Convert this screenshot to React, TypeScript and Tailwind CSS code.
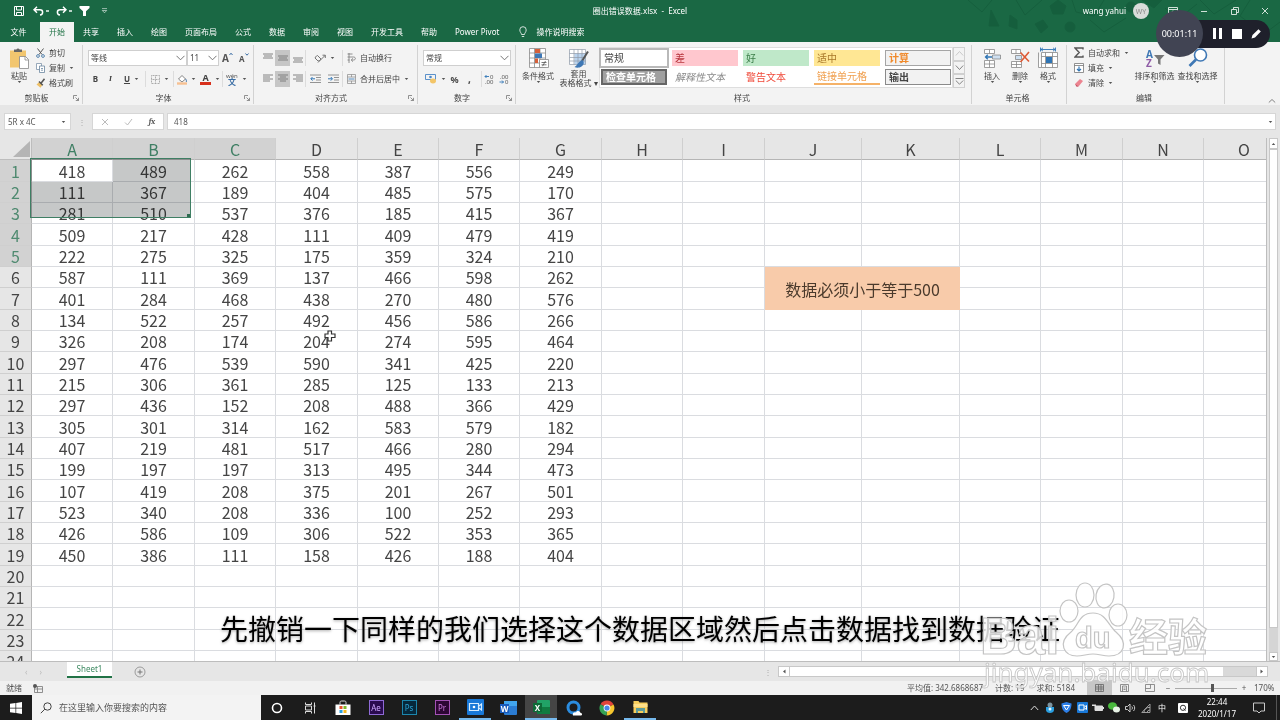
import type { ReactNode } from 'react'
import clsx from 'clsx'

const tabs = ['开始', '共享', '插入', '绘图', '页面布局', '公式', '数据', '审阅', '视图', '开发工具', '帮助', 'Power Pivot']

const columns = [
  { name: 'A', width: 'w-[81px]' },
  { name: 'B', width: 'w-[82px]' },
  { name: 'C', width: 'w-[81px]' },
  { name: 'D', width: 'w-[82px]' },
  { name: 'E', width: 'w-[81px]' },
  { name: 'F', width: 'w-[81px]' },
  { name: 'G', width: 'w-[82px]' },
  { name: 'H', width: 'w-[81px]' },
  { name: 'I', width: 'w-[82px]' },
  { name: 'J', width: 'w-[97px]' },
  { name: 'K', width: 'w-[98px]' },
  { name: 'L', width: 'w-[81px]' },
  { name: 'M', width: 'w-[82px]' },
  { name: 'N', width: 'w-[81px]' },
  { name: 'O', width: 'w-[81px]' },
]

const values = [
  [418, 489, 262, 558, 387, 556, 249],
  [111, 367, 189, 404, 485, 575, 170],
  [281, 510, 537, 376, 185, 415, 367],
  [509, 217, 428, 111, 409, 479, 419],
  [222, 275, 325, 175, 359, 324, 210],
  [587, 111, 369, 137, 466, 598, 262],
  [401, 284, 468, 438, 270, 480, 576],
  [134, 522, 257, 492, 456, 586, 266],
  [326, 208, 174, 204, 274, 595, 464],
  [297, 476, 539, 590, 341, 425, 220],
  [215, 306, 361, 285, 125, 133, 213],
  [297, 436, 152, 208, 488, 366, 429],
  [305, 301, 314, 162, 583, 579, 182],
  [407, 219, 481, 517, 466, 280, 294],
  [199, 197, 197, 313, 495, 344, 473],
  [107, 419, 208, 375, 201, 267, 501],
  [523, 340, 208, 336, 100, 252, 293],
  [426, 586, 109, 306, 522, 353, 365],
  [450, 386, 111, 158, 426, 188, 404],
]

const rowCount = 24

const cellStyles = [
  { name: '常规', look: 'bg-white text-[#444] outline-2 outline-[#b9b9b9]' },
  { name: '差', look: 'bg-[#ffc7ce] text-[#b8373f]' },
  { name: '好', look: 'bg-[#bfe8c9] text-[#3b7d48]' },
  { name: '适中', look: 'bg-[#ffe794] text-[#a9782a]' },
  { name: '计算', look: 'border border-[#a5a5a5] bg-[#f2f2f2] font-bold text-[#f08a2c]' },
  { name: '检查单元格', look: 'border-2 border-[#666] bg-[#a0a0a0] font-bold text-white' },
  { name: '解释性文本', look: 'italic text-[#8a8a8a]' },
  { name: '警告文本', look: 'text-[#f04a3a]' },
  { name: '链接单元格', look: 'border-b-2 border-[#f5b268] text-[#f0a050]' },
  { name: '输出', look: 'border border-[#8a8a8a] bg-[#f2f2f2] font-bold text-[#444]' },
]

function Svg({ w, h, children, label }: { w: number; h: number; children: ReactNode; label?: string }) {
  return (
    <svg width={w} height={h} viewBox={`0 0 ${w} ${h}`} fill="none" className="shrink-0" aria-label={label} aria-hidden={!label}>
      {children}
    </svg>
  )
}

function Caret() {
  return (
    <Svg w={5} h={4}>
      <path d="M0.8 1h3.4L2.5 3z" fill="#555" />
    </Svg>
  )
}

function Separator() {
  return <div className="h-4 w-px shrink-0 bg-[#dcdcdc]" />
}

function Group({ label, width, launcher, children }: { label: string; width: string; launcher?: boolean; children: ReactNode }) {
  return (
    <section className={clsx('flex shrink-0 flex-col pt-[3px] pb-px', width)}>
      <div className="flex flex-1 border-r border-[#d2d2d2]">{children}</div>
      <div className="flex h-3 items-center border-r border-[#d2d2d2] pr-[3px]">
        <span className="flex-1 text-center">{label}</span>
        {launcher && (
          <button aria-label={`${label}设置`}>
            <Svg w={6} h={6}>
              <path d="M0.5 4V0.5H4M2.5 2.5l3 3M5.5 2.8v2.7H2.8" stroke="#777" strokeWidth="0.8" />
            </Svg>
          </button>
        )}
      </div>
    </section>
  )
}

function IconButton({ label, active, width = 'w-[15px]', children }: { label: string; active?: boolean; width?: string; children: ReactNode }) {
  return (
    <button aria-label={label} className={clsx('flex h-4 shrink-0 items-center justify-center gap-1', width, active && 'bg-[#c6c6c6]')}>
      {children}
    </button>
  )
}

function BigButton({ lines, width, caret = true, children }: { lines: string[]; width: string; caret?: boolean; children: ReactNode }) {
  return (
    <button className={clsx('flex shrink-0 flex-col items-center pt-[2px]', width)}>
      {children}
      {lines.map((line) => (
        <span key={line} className="whitespace-nowrap leading-[9px]">{line}</span>
      ))}
      {caret && <Caret />}
    </button>
  )
}

function SmallButton({ label, caret, children }: { label: string; caret?: boolean; children: ReactNode }) {
  return (
    <button className="flex h-[15px] items-center gap-1 whitespace-nowrap">
      {children}
      <span>{label}</span>
      {caret && <Caret />}
    </button>
  )
}

function Dropdown({ label, value, width }: { label: string; value: string; width: string }) {
  return (
    <div className={clsx('relative h-4 shrink-0', width)}>
      <select aria-label={label} className="h-full w-full appearance-none border border-[#cfcfcf] bg-white pl-[2px] text-[8px] leading-none">
        <option>{value}</option>
      </select>
      <div className="pointer-events-none absolute top-[5px] right-[2px]">
        <Svg w={9} h={6}>
          <path d="M0.5 0.8l4 4 4-4" stroke="#666" strokeWidth="0.9" />
        </Svg>
      </div>
    </div>
  )
}

function AlignIcon({ lines }: { lines: number[][] }) {
  return (
    <Svg w={10} h={10}>
      {lines.map(([x, y, w]) => (
        <path key={y} d={`M${x} ${y}h${w}`} stroke="#777" strokeWidth="0.9" />
      ))}
    </Svg>
  )
}

function TitleBar() {
  return (
    <header className="relative bg-[#1a6844] text-white">
      <div className="pointer-events-none absolute top-0 right-0 opacity-40">
        <Svg w={320} h={42}>
          <g fill="#0f5133" stroke="#0f5133">
            <path d="M31 10l8 16h-10zM50 15l7 5v9l-8-3zM90 6l8-6 8 6-3 8H93zM75 24l8-4 5 7-7 6zM182 0l12 8 8-8z" />
            <circle cx="110" cy="27" r="5" />
            <circle cx="171" cy="7" r="5" />
            <path d="M8 0l14 12 10-12M56 0l9 15 17-15M112 0l4 12 18 4 10-16M130 20l14 12 22-14M205 8l12 12 20-16M240 0l14 14 22-14M290 0l-10 16 24 18 16-12" fill="none" />
          </g>
        </Svg>
      </div>
      <div className="relative grid h-[22px] grid-cols-[1fr_auto_1fr] items-center">
        <div className="flex items-center pl-[14px]">
          <button aria-label="保存">
            <Svg w={10} h={10}>
              <path d="M0.5 0.5h9v9h-9zM2.5 0.5v3.5h5V0.5M2.5 9.5V6.5h5v3" stroke="#fff" />
            </Svg>
          </button>
          <button aria-label="撤销" className="ml-[9px] flex items-center gap-[2px]">
            <Svg w={11} h={10}>
              <path d="M4 0.8L1 3.8l3 3M1.2 3.8H7c3.5 0 3.5 4.6 0 5.2" stroke="#fff" strokeWidth="1.5" />
            </Svg>
            <span className="h-[2px] w-[3px] bg-white/70" />
          </button>
          <button aria-label="恢复" className="ml-[7px] flex items-center gap-[2px]">
            <Svg w={11} h={10}>
              <path d="M7 0.8l3 3-3 3M9.8 3.8H4C0.5 3.8 0.5 8.4 4 9" stroke="#fff" strokeWidth="1.5" />
            </Svg>
            <span className="h-[2px] w-[3px] bg-white/70" />
          </button>
          <button aria-label="筛选" className="ml-[7px]">
            <Svg w={11} h={10}>
              <path d="M0.5 0h10v2L7 5.2V10H4V5.2L0.5 2z" fill="#fff" />
            </Svg>
          </button>
          <button aria-label="自定义快速访问工具栏" className="ml-[11px]">
            <Svg w={7} h={6}>
              <path d="M1 0.6h5M1.3 2.5h4.4L3.5 4.8z" stroke="#fff" strokeWidth="0.8" opacity="0.7" />
            </Svg>
          </button>
        </div>
        <h1 className="whitespace-pre">圈出错误数据.xlsx  -  Excel</h1>
        <div className="flex items-center justify-end">
          <span>wang yahui</span>
          <span className="ml-[7px] flex size-4 items-center justify-center rounded-full bg-[#d9dcda] text-[7px] text-[#8b8b8b]">WY</span>
          <button aria-label="功能区显示选项" className="ml-2 flex w-[31px] justify-center">
            <Svg w={10} h={8}>
              <path d="M0.5 0.5h9v7h-9zM0.5 2.5h9M5 7V4M3.5 5.2L5 3.8l1.5 1.4" stroke="#e5efe9" strokeWidth="0.9" />
            </Svg>
          </button>
          <button aria-label="最小化" className="flex w-[31px] justify-center">
            <Svg w={8} h={8}>
              <path d="M1 4.5h6" stroke="#e5efe9" strokeWidth="0.9" />
            </Svg>
          </button>
          <button aria-label="还原" className="flex w-[31px] justify-center">
            <Svg w={8} h={8}>
              <path d="M0.5 2.5h5v5h-5zM2.5 2.5v-2h5v5h-2" stroke="#e5efe9" strokeWidth="0.9" />
            </Svg>
          </button>
          <button aria-label="关闭" className="flex w-[30px] justify-center">
            <Svg w={8} h={8}>
              <path d="M1 1l6 6M7 1L1 7" stroke="#e5efe9" strokeWidth="0.9" />
            </Svg>
          </button>
        </div>
      </div>
      <nav className="relative flex h-5 items-stretch">
        <button className="w-10 pr-[3px]">文件</button>
        {tabs.map((tab) => (
          <button
            key={tab}
            className={clsx('px-[9px] whitespace-nowrap', tab === '开始' && 'bg-[#f3f3f3] text-[#217346]')}
          >
            {tab}
          </button>
        ))}
        <button className="ml-[11px] flex items-center gap-[9px]">
          <Svg w={8} h={12}>
            <path d="M2.5 8.5C2.5 7 0.8 6.2 0.8 3.9a3.2 3.2 0 0 1 6.4 0C7.2 6.2 5.5 7 5.5 8.5zM2.8 10.5h2.4" stroke="#fff" strokeWidth="0.8" />
          </Svg>
          操作说明搜索
        </button>
      </nav>
    </header>
  )
}

function Ribbon() {
  return (
    <div className="flex h-[63px] shrink-0 bg-[#f3f3f3] text-[#444]">
      <Group label="剪贴板" width="w-[83px]" launcher>
        <BigButton lines={['粘贴']} width="w-[36px] pl-[2px]">
          <Svg w={20} h={24}>
            <path d="M1 3.5h16v17H1z" fill="#f2c66f" />
            <path d="M5 5V2.6h2.4a1.7 1.7 0 0 1 3.2 0H13V5z" fill="#666" />
            <path d="M10.5 9.5h6l3 3v9h-9z" fill="#fff" stroke="#888" strokeWidth="0.8" />
            <path d="M16 9.5V13h3.5" stroke="#888" strokeWidth="0.8" />
          </Svg>
        </BigButton>
        <div className="flex flex-col items-start">
          <SmallButton label="剪切">
            <Svg w={9} h={10}>
              <path d="M1.5 0.5l4.5 6M7.5 0.5L3 6.5" stroke="#555" />
              <circle cx="2" cy="8" r="1.4" stroke="#4a7ba8" strokeWidth="0.9" />
              <circle cx="7" cy="8" r="1.4" stroke="#4a7ba8" strokeWidth="0.9" />
            </Svg>
          </SmallButton>
          <SmallButton label="复制" caret>
            <Svg w={9} h={10}>
              <path d="M0.5 0.5h5v6h-5z" stroke="#7d93a8" fill="#fff" strokeWidth="0.8" />
              <path d="M3.5 3h5v6.5h-5zM5 5.5h2M5 7.2h2" stroke="#6b86a0" fill="#fff" strokeWidth="0.8" />
            </Svg>
          </SmallButton>
          <SmallButton label="格式刷">
            <Svg w={9} h={10}>
              <path d="M0.5 6.5l3-2.8 3 3-2 3z" fill="#eec067" />
              <path d="M3 3.5l3.8 3.8M5 5.2L8.5 0.8" stroke="#555" strokeWidth="1.5" />
            </Svg>
          </SmallButton>
        </div>
      </Group>

      <Group label="字体" width="w-[171px]" launcher>
        <div className="flex flex-col gap-[5px] pt-[5px] pl-[5px]">
          <div className="flex items-center">
            <Dropdown label="字体" value="等线" width="w-[99px]" />
            <Dropdown label="字号" value="11" width="w-[32px]" />
            <IconButton label="增大字号" width="w-[17px]">
              <Svg w={11} h={12}>
                <text x="0" y="10" fontSize="10" fontWeight="bold" fill="#555">A</text>
                <path d="M7.500 3L9 1.200 10.500 3" stroke="#3a6ea5" />
              </Svg>
            </IconButton>
            <IconButton label="减小字号">
              <Svg w={10} h={12}>
                <text x="0" y="10" fontSize="8" fontWeight="bold" fill="#555">A</text>
                <path d="M6.500 1.500L8 3.200l1.500-1.700" stroke="#3a6ea5" />
              </Svg>
            </IconButton>
          </div>
          <div className="flex items-center">
            <IconButton label="加粗"><b>B</b></IconButton>
            <IconButton label="倾斜"><i className="font-serif font-bold">I</i></IconButton>
            <IconButton label="下划线" width="w-[27px]"><u className="font-bold">U</u><Caret /></IconButton>
            <Separator />
            <IconButton label="边框" width="w-[27px]">
              <Svg w={9} h={9}>
                <path d="M0.5 0.5h8v8h-8zM4.5 0.5v8M0.5 4.5h8" stroke="#999" strokeWidth="0.8" strokeDasharray="1 0.5" />
              </Svg>
              <Caret />
            </IconButton>
            <Separator />
            <IconButton label="填充颜色" width="w-[24px]">
              <Svg w={10} h={11}>
                <path d="M1.5 5L5 1.5 8.5 5 5 8z" fill="#fff" stroke="#666" strokeWidth="0.8" />
                <path d="M8.5 5c1 1 1 2 .8 3" stroke="#3a6ea5" />
                <path d="M0 9.5h10" stroke="#f6c192" strokeWidth="2.4" />
              </Svg>
              <Caret />
            </IconButton>
            <IconButton label="字体颜色" width="w-[24px]">
              <span className="w-[11px] border-b-3 border-[#d8301c] text-[9px] leading-[9px] font-bold">A</span>
              <Caret />
            </IconButton>
            <Separator />
            <IconButton label="拼音" width="w-[26px]">
              <Svg w={12} h={13}>
                <text x="0" y="5" fontSize="6" fill="#555">wén</text>
                <text x="2" y="12" fontSize="8" fontWeight="bold" fill="#3a6ea5">文</text>
              </Svg>
              <Caret />
            </IconButton>
          </div>
        </div>
      </Group>

      <Group label="对齐方式" width="w-[164px]" launcher>
        <div className="flex flex-col gap-[5px] pt-[5px] pl-[6px]">
          <div className="flex items-center">
            <IconButton label="顶端对齐"><AlignIcon lines={[[0, 1, 10], [1, 3, 8], [0, 5, 10]]} /></IconButton>
            <IconButton label="垂直居中" active><AlignIcon lines={[[0, 3, 10], [1, 5, 8], [0, 7, 10]]} /></IconButton>
            <IconButton label="底端对齐"><AlignIcon lines={[[0, 5, 10], [1, 7, 8], [0, 9, 10]]} /></IconButton>
            <Separator />
            <IconButton label="方向" width="w-[36px]">
              <Svg w={12} h={10}>
                <path d="M1 5l3 3M3.5 2.5l3.5 3.5M1 5c1-2 2-2.5 2.5-2.5M4 8c1.5 0 2-1 3-2M4 9.5L11 2.5M8.5 2.2H11.3V5" stroke="#666" strokeWidth="0.9" />
              </Svg>
              <Caret />
            </IconButton>
            <Separator />
            <div className="pl-[4px]">
              <SmallButton label="自动换行">
                <Svg w={9} h={10}>
                  <path d="M0.5 1h5M0.5 4h6c2.5 0 2.5 3 0 3H4.5M6 5.3L4.2 7 6 8.7M0.5 7h2M2 0v10" stroke="#777" strokeWidth="0.8" />
                </Svg>
              </SmallButton>
            </div>
          </div>
          <div className="flex items-center">
            <IconButton label="左对齐"><AlignIcon lines={[[0, 1, 10], [0, 3, 7], [0, 5, 10], [0, 7, 7]]} /></IconButton>
            <IconButton label="居中" active><AlignIcon lines={[[0, 1, 10], [2, 3, 6], [0, 5, 10], [2, 7, 6]]} /></IconButton>
            <IconButton label="右对齐"><AlignIcon lines={[[0, 1, 10], [3, 3, 7], [0, 5, 10], [3, 7, 7]]} /></IconButton>
            <Separator />
            <IconButton label="减少缩进量" width="w-[18px]">
              <Svg w={11} h={10}>
                <path d="M0 1h11M6 3.5h5M6 6h5M0 8.5h11" stroke="#888" strokeWidth="0.9" />
                <path d="M5 4.8H1M2.5 3L0.8 4.8l1.7 1.8" stroke="#2f75b5" />
              </Svg>
            </IconButton>
            <IconButton label="增加缩进量" width="w-[18px]">
              <Svg w={11} h={10}>
                <path d="M0 1h11M6 3.5h5M6 6h5M0 8.5h11" stroke="#888" strokeWidth="0.9" />
                <path d="M0 4.8h4M2.8 3l1.7 1.8-1.7 1.8" stroke="#2f75b5" />
              </Svg>
            </IconButton>
            <Separator />
            <div className="pl-[4px]">
              <SmallButton label="合并后居中" caret>
                <Svg w={9} h={10}>
                  <path d="M0.5 0.5h8v9h-8zM0.5 3h8M0.5 7h8M4.5 0.5V3M4.5 7v2.5" stroke="#888" strokeWidth="0.7" />
                  <path d="M1.5 5h6" stroke="#2f75b5" strokeWidth="0.8" />
                </Svg>
              </SmallButton>
            </div>
          </div>
        </div>
      </Group>

      <Group label="数字" width="w-[98px]" launcher>
        <div className="flex flex-col gap-[5px] pt-[5px] pl-[5px]">
          <Dropdown label="数字格式" value="常规" width="w-[88px]" />
          <div className="flex items-center">
            <IconButton label="会计数字格式" width="w-[24px]">
              <Svg w={12} h={10}>
                <path d="M0.5 0.5h10v5h-10z" stroke="#4a86c5" strokeWidth="0.9" />
                <circle cx="5.5" cy="3" r="1.3" fill="#4a86c5" />
                <ellipse cx="8" cy="7" rx="3" ry="2.4" fill="#f3c567" />
              </Svg>
              <Caret />
            </IconButton>
            <IconButton label="百分比"><span className="text-[9px] font-bold">%</span></IconButton>
            <IconButton label="千位分隔"><b className="text-[10px]">,</b></IconButton>
            <div className="pl-[4px]"><Separator /></div>
            <IconButton label="增加小数位数">
              <Svg w={11} h={11}>
                <path d="M5 2.500H1M2.500 1L1 2.500 2.500 4" stroke="#2f75b5" strokeWidth="0.900" />
                <text x="6" y="5" fontSize="6" fill="#555">0</text>
                <text x="1" y="10" fontSize="6" fill="#555">.00</text>
              </Svg>
            </IconButton>
            <IconButton label="减少小数位数">
              <Svg w={11} h={11}>
                <text x="1" y="5" fontSize="6" fill="#555">.00</text>
                <path d="M0.500 8h4M3 6.500L4.500 8 3 9.500" stroke="#2f75b5" strokeWidth="0.900" />
                <text x="6" y="10" fontSize="6" fill="#555">0</text>
              </Svg>
            </IconButton>
          </div>
        </div>
      </Group>

      <Group label="样式" width="w-[456px]">
        <BigButton lines={['条件格式']} width="w-[44px]">
          <Svg w={21} h={24}>
            <path d="M1.5 1.5h16v19h-16zM1.5 6h16M1.5 11h16M1.5 16h16M6.5 1.5v19M12 1.5v19" stroke="#8a8a8a" strokeWidth="0.8" fill="#fff" />
            <path d="M7 2h5v4H7zM7 11.5h3v4.5H7z" fill="#d6603a" />
            <path d="M7 6.5h7v4.5H7z" fill="#3f78b5" />
            <path d="M11.5 12.5h9v8h-9z" fill="#fff" stroke="#888" strokeWidth="0.8" />
            <path d="M13.5 15.5h5M13.5 17.8h5M17.5 14l-3 5.2" stroke="#555" strokeWidth="0.8" />
          </Svg>
        </BigButton>
        <BigButton lines={['套用', '表格格式 ▾']} width="w-[37px]" caret={false}>
          <Svg w={21} h={22}>
            <path d="M1.5 2.5h16v15h-16z" fill="#fff" />
            <path d="M6.5 6.5h11v11h-11z" fill="#b9d3ee" />
            <path d="M1.5 2.5h16v15h-16zM1.5 6.5h16M1.5 10.5h16M1.5 14h16M6 2.5v15M10 2.5v15M14 2.5v15" stroke="#8e9aa8" strokeWidth="0.7" />
            <path d="M20 4.5L14 14" stroke="#555" strokeWidth="2" />
            <path d="M14.5 13c2 2 1.500 5-1 6.500-2 1.500-5 1.500-7 .5 3-1.500 3.500-5.500 8-7z" fill="#3f78b5" />
          </Svg>
        </BigButton>
        <div className="ml-[2px] flex h-[43px] pt-[2px]">
          <div className="grid grid-cols-5 items-center gap-x-[5px] border border-[#dedede] bg-white px-px">
            {cellStyles.map((style) => (
              <button
                key={style.name}
                className={clsx('flex h-4 w-[66px] items-center pl-[3px] text-[10px] leading-none whitespace-nowrap', style.look)}
              >
                {style.name}
              </button>
            ))}
          </div>
          <div className="flex w-[12px] flex-col">
            {['上一行', '下一行', '其他样式'].map((label, i) => (
              <button key={label} aria-label={label} className="flex flex-1 items-center justify-center border border-[#d0d0d0]">
                <Svg w={9} h={7}>
                  {i === 0 && <path d="M0.8 5.5l3.700-4 3.700 4" stroke="#c5c5c5" strokeWidth="0.9" />}
                  {i === 1 && <path d="M0.8 1.500l3.700 4 3.700-4" stroke="#777" strokeWidth="0.9" />}
                  {i === 2 && <path d="M0.5 0.500h8M0.8 2.500l3.700 3.700 3.700-3.700" stroke="#777" strokeWidth="0.9" />}
                </Svg>
              </button>
            ))}
          </div>
        </div>
      </Group>

      <Group label="单元格" width="w-[95px]">
        <div className="flex pl-[6px]">
          <BigButton lines={['插入']} width="w-[28px]">
            <Svg w={20} h={24}>
              <path d="M2.5 2.500h10v4h-10zM7.500 2.500v4M2.500 13.500h10v7h-10zM7.500 13.500v7M2.500 17h10" stroke="#888" strokeWidth="0.8" fill="#fff" />
              <path d="M10.500 8h8v4h-8z" fill="#cfe0f1" stroke="#888" strokeWidth="0.8" />
              <path d="M10 10H3.500M5.800 7.700L3.500 10l2.300 2.300" stroke="#2f75b5" strokeWidth="1.300" />
            </Svg>
          </BigButton>
          <BigButton lines={['删除']} width="w-[28px]">
            <Svg w={20} h={24}>
              <path d="M1.500 2.500h9v4h-9zM6 2.500v4M1.500 14.500h10v6h-10zM6.500 14.500v6M1.500 17.500h10" stroke="#888" strokeWidth="0.8" fill="#fff" />
              <path d="M5.500 8.500h6v4h-6z" fill="#cfe0f1" stroke="#888" strokeWidth="0.8" />
              <path d="M10.500 5.500l8.500 9M19 5l-8.500 10" stroke="#dd5a35" strokeWidth="1.600" />
            </Svg>
          </BigButton>
          <BigButton lines={['格式']} width="w-[28px]">
            <Svg w={20} h={24}>
              <path d="M3.500 5.500h16v15h-16zM3.500 9.500h16M3.500 16.500h16M7.500 5.500v15M14.500 5.500v15M0.500 5.500v15h3" stroke="#888" strokeWidth="0.8" fill="#fff" />
              <path d="M8 10h6v6H8z" fill="#2f75b5" />
              <path d="M3 2.500h14M5 0.800L3 2.500l2 1.700M15 0.800l2 1.700-2 1.700M2.500 0.500v4M17.500 0.500v4" stroke="#2f75b5" strokeWidth="0.900" />
            </Svg>
          </BigButton>
        </div>
      </Group>

      <Group label="编辑" width="w-[158px]">
        <div className="flex w-[66px] flex-col items-start pl-[7px]">
          <SmallButton label="自动求和" caret>
            <Svg w={10} h={11}>
              <path d="M9 2.500V1H1l4.200 4.500L1 10h8V8.500" stroke="#555" strokeWidth="1.400" />
            </Svg>
          </SmallButton>
          <SmallButton label="填充" caret>
            <Svg w={10} h={10}>
              <path d="M0.500 0.500h9v9h-9zM0.500 2.500h9" stroke="#777" strokeWidth="0.8" fill="#fff" />
              <path d="M5 3.500v4.500M3 6l2 2 2-2" stroke="#2f75b5" strokeWidth="1.200" />
            </Svg>
          </SmallButton>
          <SmallButton label="清除" caret>
            <Svg w={10} h={10}>
              <path d="M1 6L6 1l3 2-4.500 5.500H2.500z" fill="#ec8490" />
              <path d="M1 6l3.500 2.500H2.500z" fill="#b94b5c" />
            </Svg>
          </SmallButton>
        </div>
        <BigButton lines={['排序和筛选']} width="w-[43px]">
          <Svg w={20} h={24}>
            <text x="1" y="11" fontSize="10" fontWeight="bold" fill="#3f78b5">A</text>
            <text x="1" y="20" fontSize="10" fontWeight="bold" fill="#8e5ba6">Z</text>
            <path d="M9 8h10.500l-4 4.500V18l-2.500-1.500v-4z" fill="#777" />
          </Svg>
        </BigButton>
        <BigButton lines={['查找和选择']} width="w-[43px]">
          <Svg w={20} h={24}>
            <circle cx="12.500" cy="8" r="6" stroke="#3f78b5" strokeWidth="1.600" fill="#fff" />
            <path d="M8 12.500L1.500 19" stroke="#3f78b5" strokeWidth="2.600" />
          </Svg>
        </BigButton>
      </Group>

      <div className="flex flex-1 items-end justify-end pr-1">
        <button aria-label="折叠功能区">
          <Svg w={8} h={7}>
            <path d="M0.800 4.500L4 1.500l3.200 3" stroke="#777" strokeWidth="0.9" />
          </Svg>
        </button>
      </div>
    </div>
  )
}

function FormulaBar() {
  return (
    <div className="flex h-[33px] shrink-0 items-center bg-[#e6e6e6] px-1 text-[#555]">
      <div className="flex h-[17px] w-[67px] items-center border border-[#d6d6d6] bg-white pr-1">
        <input aria-label="名称框" defaultValue="5R x 4C" className="w-full min-w-0 pl-[3px] text-[8px]" />
        <Caret />
      </div>
      <span className="w-[21px] text-center text-[#aaa]">⋮</span>
      <div className="flex h-[17px] w-[72px] items-center justify-around border border-[#d6d6d6] bg-white">
        <button aria-label="取消">
          <Svg w={8} h={8}><path d="M1 1l6 6M7 1L1 7" stroke="#bbb" /></Svg>
        </button>
        <button aria-label="输入">
          <Svg w={9} h={8}><path d="M1 4.500l2.500 2.500L8 1" stroke="#bbb" /></Svg>
        </button>
        <button aria-label="插入函数" className="font-serif font-bold italic">fx</button>
      </div>
      <div className="ml-[3px] flex h-[17px] flex-1 items-center border border-[#d6d6d6] bg-white pr-[2px]">
        <input aria-label="编辑栏" defaultValue="418" className="w-full min-w-0 pl-[6px] text-[8px]" />
        <Caret />
      </div>
    </div>
  )
}

function Sheet() {
  return (
    <table className="w-[1255px] table-fixed border-separate border-spacing-0 text-center text-[16px] leading-5 text-[#444]">
      <thead>
        <tr className="h-[22px] bg-[#e6e6e6]">
          <th className="w-[32px] border-r border-b border-[#bdbdbd] p-0">
            <div className="flex justify-end pr-[1px]">
              <Svg w={17} h={16}><path d="M17 0v16H0z" fill="#b5b5b5" /></Svg>
            </div>
          </th>
          {columns.map((column, i) => (
            <th
              key={column.name}
              className={clsx('border-r border-b border-r-[#cfcfcf] border-b-[#b5b5b5] p-0 font-normal', column.width, i < 3 && 'bg-[#d2d2d2] text-[#3f7f64]')}
            >
              {column.name}
            </th>
          ))}
        </tr>
      </thead>
      <tbody>
        {Array.from({ length: rowCount }, (_, row) => (
          <tr key={row} className={row % 3 === 0 ? 'h-[22px]' : 'h-[21px]'}>
            <th
              className={clsx('border-r border-b border-r-[#b5b5b5] border-b-[#cfcfcf] p-0 font-normal', row < 5 ? 'bg-[#d2d2d2] text-[#4f8a70]' : 'bg-[#e6e6e6]')}
            >
              {row + 1}
            </th>
            {columns.map((column, col) => {
              // J6:K7 is one merged cell
              if (row === 5 && column.name === 'J') {
                return (
                  <td key={column.name} colSpan={2} rowSpan={2} className="bg-[#f8cbaa] p-0 text-[#4a3a2c]">
                    数据必须小于等于500
                  </td>
                )
              }
              if ((row === 5 || row === 6) && (column.name === 'J' || column.name === 'K')) return null
              return (
                <td
                  key={column.name}
                  className={clsx('border-r border-b border-[#dadce0] p-0', row === 0 && col === 0 && 'relative z-10 bg-white')}
                >
                  {values[row]?.[col]}
                </td>
              )
            })}
          </tr>
        ))}
      </tbody>
    </table>
  )
}

function Watermark() {
  return (
    <div className="pointer-events-none absolute right-[66px] bottom-[28px] z-40">
      <svg width="236" height="114" viewBox="0 0 236 114" fill="#fff" fillOpacity="0.8" stroke="#c4c4c4" strokeWidth="1.200" aria-label="Baidu 经验">
        <ellipse cx="91" cy="33" rx="9" ry="11" />
        <ellipse cx="107" cy="17" rx="9" ry="12" />
        <ellipse cx="127" cy="18" rx="9" ry="12" transform="rotate(10 127 18)" />
        <ellipse cx="140" cy="37" rx="9" ry="11" />
        <path d="M115 35c-14 0-14 12-22 19-14 11-7 24 6 24 6 0 10-2 16-2s10 2 16 2c15 0 20-13 7-24-8-7-10-19-23-19z" />
        <g fontFamily="Liberation Sans, sans-serif" fontWeight="bold">
          <text x="2" y="76" fontSize="51">Bai</text>
          <text x="97" y="70" fontSize="29">du</text>
        </g>
        <text x="151" y="73" fontSize="39" fontWeight="bold" fontFamily="Noto Sans CJK SC, sans-serif">经验</text>
        <text x="6" y="104" fontSize="26" fontFamily="Noto Sans, sans-serif" strokeWidth="0.800">jingyan.baidu.com</text>
      </svg>
    </div>
  )
}

function SheetBar() {
  return (
    <div className="flex h-5 shrink-0 items-center border-t border-[#bdbdbd] bg-[#e6e6e6]">
      <div className="flex w-[67px] justify-center gap-3 text-[#bbb]">
        <button aria-label="上一张">‹</button>
        <button aria-label="下一张">›</button>
      </div>
      <button className="h-4 w-[45px] self-start border-b-2 border-[#217346] bg-white text-[#3f8a62]">Sheet1</button>
      <button aria-label="新工作表" className="ml-[22px]">
        <Svg w={12} h={12}>
          <circle cx="6" cy="6" r="5" stroke="#888" strokeWidth="0.8" />
          <path d="M6 3.500v5M3.500 6h5" stroke="#777" />
        </Svg>
      </button>
      <div className="flex-1" />
      <span className="w-[14px] text-[#aaa]">⋮</span>
      <div className="mr-3 flex h-[11px] w-[490px] border border-[#c8c8c8] bg-[#d9d9d9]">
        <button aria-label="向左滚动" className="flex w-[11px] items-center justify-center border-r border-[#c8c8c8] bg-white">
          <Svg w={4} h={5}><path d="M3.500 0.500v4L1 2.500z" fill="#555" /></Svg>
        </button>
        <div className="flex-[13] bg-white" />
        <div className="flex-1" />
        <button aria-label="向右滚动" className="flex w-[11px] items-center justify-center border-l border-[#c8c8c8] bg-white">
          <Svg w={4} h={5}><path d="M0.500 0.500v4L3 2.500z" fill="#555" /></Svg>
        </button>
      </div>
    </div>
  )
}

function StatusBar() {
  return (
    <div className="flex h-[14px] shrink-0 items-center bg-[#f1f1f1] text-[#555]">
      <span className="w-[33px] pl-[6px]">就绪</span>
      <Svg w={10} h={9}>
        <path d="M1.500 2.500h8v6h-8zM1.500 5h8M4.500 2.500v6" stroke="#777" strokeWidth="0.8" />
        <circle cx="2" cy="2" r="2" fill="#555" />
      </Svg>
      <div className="flex flex-1 justify-end gap-3 pr-[12px]">
        <span>平均值: 342.6868687</span>
        <span>计数: 19</span>
        <span>求和: 5184</span>
      </div>
      <IconButton label="普通" active width="w-[25px]">
        <Svg w={9} h={8}><path d="M0.500 0.500h8v7h-8zM0.500 3h8M0.500 5h8M3.500 0.500v7M6 0.500v7" stroke="#666" strokeWidth="0.8" /></Svg>
      </IconButton>
      <IconButton label="页面布局" width="w-[25px]">
        <Svg w={9} h={8}><path d="M0.500 0.500h8v7h-8zM2.500 2v5.500M6.500 2v5.500M2.500 2h4M3.500 4h2M3.500 5.500h2" stroke="#777" strokeWidth="0.8" /></Svg>
      </IconButton>
      <IconButton label="分页预览" width="w-[25px]">
        <Svg w={10} h={8}><path d="M0.500 0.500h9v7h-9zM0.500 4.500h5v-4" stroke="#777" strokeWidth="0.8" /></Svg>
      </IconButton>
      <button aria-label="缩小" className="w-3">−</button>
      <input
        type="range"
        aria-label="显示比例"
        min={10}
        max={400}
        defaultValue={250}
        className="mx-[1px] h-[9px] w-[62px] appearance-none bg-[linear-gradient(#aaa,#aaa)] bg-[length:100%_1px] bg-center bg-no-repeat [&::-webkit-slider-thumb]:h-2 [&::-webkit-slider-thumb]:w-[3px] [&::-webkit-slider-thumb]:appearance-none [&::-webkit-slider-thumb]:bg-[#555]"
      />
      <button aria-label="放大" className="w-3">+</button>
      <span className="w-[30px] pl-[4px]">170%</span>
    </div>
  )
}

function AdobeIcon({ name, look }: { name: string; look: string }) {
  return <span className={clsx('flex size-[15px] items-center justify-center border text-[8px] leading-none', look)}>{name}</span>
}

const apps: { name: string; state?: string; icon: ReactNode }[] = [
  { name: 'Cortana', icon: <Svg w={14} h={14}><circle cx="7" cy="7" r="4.500" stroke="#fff" strokeWidth="1.600" /></Svg> },
  { name: '任务视图', icon: <Svg w={14} h={14}><path d="M2.500 1.500v2h6v-2M2.500 12.500v-2h6v2M2.500 5h6v4h-6zM11.500 1.500v11M10.500 5h2" stroke="#ddd" strokeWidth="1" /></Svg> },
  {
    name: 'Microsoft Store',
    icon: (
      <Svg w={16} h={16}>
        <path d="M5 4.500V2.500c0-1 .5-1.500 1.500-1.500h3c1 0 1.500.5 1.500 1.500v2" stroke="#ddd" />
        <path d="M0.500 4.500h15V15h-15z" fill="#fff" />
        <path d="M4.500 6h3v3h-3z" fill="#e8502e" /><path d="M8.500 6h3v3h-3z" fill="#7db928" />
        <path d="M4.500 10h3v3h-3z" fill="#2a9fe0" /><path d="M8.500 10h3v3h-3z" fill="#f7b61c" />
      </Svg>
    ),
  },
  { name: 'After Effects', icon: <AdobeIcon name="Ae" look="border-[#8f6ad6] bg-[#2a0b4f] text-[#cfa8ff]" /> },
  { name: 'Photoshop', icon: <AdobeIcon name="Ps" look="border-[#1c86ad] bg-[#06283b] text-[#2ba4d6]" /> },
  { name: 'Premiere', icon: <AdobeIcon name="Pr" look="border-[#a352b5] bg-[#2d0634] text-[#cf7ae0]" /> },
  {
    name: '录屏',
    state: 'border-b-2 border-[#76b9ed]',
    icon: (
      <Svg w={17} h={16}>
        <rect width="17" height="16" rx="1" fill="#1878d8" />
        <path d="M2.500 4.500h9v7h-9zM12 7l2.500-2v6L12 9" stroke="#d6ecff" strokeWidth="1.200" />
        <circle cx="7" cy="8" r="1.300" fill="#fff" />
      </Svg>
    ),
  },
  {
    name: 'Word',
    icon: (
      <Svg w={17} h={14}>
        <rect x="4" width="13" height="14" rx="1" fill="#2b7cd3" /><rect x="4" width="13" height="5" fill="#41a5ee" />
        <rect y="3" width="9" height="9" fill="#185abd" />
        <text x="0.800" y="10.500" fontSize="8" fontWeight="bold" fill="#fff">W</text>
      </Svg>
    ),
  },
  {
    name: 'Excel',
    state: 'bg-[#454545] border-b-2 border-[#76b9ed]',
    icon: (
      <Svg w={17} h={14}>
        <rect x="4" width="13" height="14" rx="1" fill="#21a366" /><rect x="4" y="7" width="13" height="7" fill="#107c41" />
        <rect y="3" width="9" height="9" fill="#0e6a37" />
        <text x="1.800" y="10.500" fontSize="8" fontWeight="bold" fill="#fff">X</text>
      </Svg>
    ),
  },
  {
    name: 'QQ浏览器',
    icon: (
      <Svg w={16} h={16}>
        <circle cx="7.500" cy="7.500" r="5.500" stroke="#2b8de0" strokeWidth="3" />
        <path d="M7 15.500c-1-3 2-4 3-3 1-2.500 4.500-1.500 4.500.5 2 0 2 2.500.5 2.500z" fill="#fff" />
      </Svg>
    ),
  },
  {
    name: 'Chrome',
    icon: (
      <Svg w={16} h={16}>
        <path d="M8 8L1.500 4.200A7.500 7.500 0 0 1 14.500 4.500z" fill="#e0443a" />
        <path d="M8 8l6.500-3.500A7.500 7.500 0 0 1 7.500 15.500z" fill="#f6c62e" />
        <path d="M8 8l-.5 7.500A7.500 7.500 0 0 1 1.500 4.200z" fill="#35a455" />
        <circle cx="8" cy="8" r="3.400" fill="#fff" /><circle cx="8" cy="8" r="2.600" fill="#4a86e8" />
      </Svg>
    ),
  },
  {
    name: '文件资源管理器',
    state: 'border-b-2 border-[#76b9ed]',
    icon: (
      <Svg w={15} h={14}>
        <path d="M0.500 1h5l1 1.500h8V13H0.500z" fill="#f7ce5c" /><path d="M0.500 4h14v3h-14z" fill="#ffe08a" />
        <path d="M3 13V8h9v5h-2v-2H5v2z" fill="#5e9c9a" />
      </Svg>
    ),
  },
]

const tray: { name: string; icon: ReactNode }[] = [
  { name: '显示隐藏的图标', icon: <Svg w={9} h={6}><path d="M0.800 5l3.700-4 3.700 4" stroke="#ddd" /></Svg> },
  { name: 'QQ', icon: <Svg w={10} h={11}><path d="M1 5h8v3c0 4-8 4-8 0z" fill="#2a9fe0" /><circle cx="5" cy="3" r="2.500" fill="#7d94a0" /><circle cx="5" cy="7" r="1.500" fill="#e6f6ff" /></Svg> },
  { name: '电脑管家', icon: <Svg w={11} h={11}><path d="M0.500 1.500L5.500 0l5 1.500c0 5-1.500 7.500-5 9.500-3.500-2-5-4.500-5-9.500z" fill="#2d7fe8" /><path d="M2.500 3.500h6L5.500 8z" stroke="#fff" /></Svg> },
  { name: '录屏', icon: <Svg w={11} h={11}><rect width="11" height="11" rx="1" fill="#1878d8" /><path d="M2 3h5v5H2zM7.500 5L9.500 3.500v4L7.500 6" stroke="#fff" /></Svg> },
  { name: '电池', icon: <Svg w={12} h={9}><path d="M3 3h7.500v4.500H3z" fill="#ddd" stroke="#ddd" /><path d="M0 2.500h4M1 1v1M3 1v1M11.500 4v2" stroke="#ddd" /></Svg> },
  { name: '微信', icon: <Svg w={12} h={11}><ellipse cx="4.500" cy="4" rx="4.500" ry="3.800" fill="#48b83c" /><ellipse cx="8.500" cy="7.500" rx="3.500" ry="3" fill="#e8f3e6" /></Svg> },
  { name: '音量', icon: <Svg w={11} h={10}><path d="M0.500 3.500h2L5 1v8L2.500 6.500h-2zM6.800 3.500c.8.800.8 2.200 0 3M8.500 2c1.600 1.800 1.600 4.200 0 6" stroke="#ddd" strokeWidth="0.9" /></Svg> },
  { name: '网络', icon: <Svg w={10} h={10}><path d="M0.800 9.500L9 1v8.500zM3 9.500a5 5 0 0 1 6-5M6 9.500a3 3 0 0 1 3-2.500" stroke="#aaa" strokeWidth="0.9" /></Svg> },
  { name: '输入法', icon: <span>中</span> },
]

function Taskbar() {
  return (
    <footer className="flex h-[25px] shrink-0 items-stretch bg-[#1c1c1c] text-white">
      <button aria-label="开始" className="flex w-8 items-center justify-center">
        <Svg w={12} h={12}>
          <path d="M0 1.700L5.500 1v4.700H0zM6.200 0.900L12 0v5.700H6.200zM0 6.400h5.500V11L0 10.300zM6.200 6.400H12V12l-5.800-.9z" fill="#fff" />
        </Svg>
      </button>
      <label className="flex w-[229px] items-center gap-[7px] bg-[#f3f3f3] pl-2">
        <Svg w={12} h={12}>
          <circle cx="7.500" cy="4.500" r="3.700" stroke="#444" />
          <path d="M4.800 7.200L0.800 11.200" stroke="#444" />
        </Svg>
        <input aria-label="搜索" placeholder="在这里输入你要搜索的内容" className="min-w-0 flex-1 text-[9px] text-[#444] placeholder:text-[#555]" />
      </label>
      <div className="flex gap-px">
        {apps.map((app) => (
          <button key={app.name} aria-label={app.name} className={clsx('flex w-8 items-center justify-center', app.state)}>
            {app.icon}
          </button>
        ))}
      </div>
      <div className="flex-1" />
      {tray.map((item) => (
        <button key={item.name} aria-label={item.name} className="flex w-4 items-center justify-center">
          {item.icon}
        </button>
      ))}
      <button aria-label="搜狗" className="ml-[3px] flex w-[19px] items-center justify-center">
        <Svg w={10} h={10}><rect width="10" height="10" rx="1" fill="#fff" /><circle cx="5" cy="4.800" r="2.600" stroke="#333" /><path d="M5.500 5.500l2 2" stroke="#333" /></Svg>
      </button>
      <time className="mr-1 flex w-[50px] flex-col items-center justify-center leading-3">
        <span>22:44</span>
        <span>2020/1/17</span>
      </time>
      <button aria-label="通知" className="flex w-[26px] items-center justify-center">
        <Svg w={12} h={12}><path d="M0.500 1h11v8H8L6 11 4 9H0.500z" stroke="#ddd" strokeWidth="0.9" /></Svg>
      </button>
      <div className="ml-1 w-1 border-l border-[#555]" />
    </footer>
  )
}

function Recorder() {
  return (
    <div className="absolute top-[10px] right-[10px] z-50 flex items-center text-white">
      <div className="z-10 flex size-[47px] items-center justify-center rounded-full bg-[#414453] text-[9px]">00:01:11</div>
      <div className="-ml-6 flex h-7 w-[91px] items-center justify-end gap-[9px] rounded-r-full bg-[#1f202b] pr-[8px]">
        <button aria-label="暂停"><Svg w={11} h={11}><path d="M2.500 0v11M8.500 0v11" stroke="#fff" strokeWidth="3" /></Svg></button>
        <button aria-label="停止"><Svg w={10} h={10}><path d="M0 0h10v10H0z" fill="#fff" /></Svg></button>
        <button aria-label="画笔"><Svg w={11} h={11}><path d="M0.500 10.500l1-3.500L7.500 1.200l2.300 2.300L4 9.500z" fill="#fff" /></Svg></button>
      </div>
    </div>
  )
}

export default function App() {
  return (
    <div className="relative flex h-screen flex-col overflow-hidden bg-[#e6e6e6] font-['Noto_Sans','Noto_Sans_CJK_SC',sans-serif] text-[8px] leading-none">
      <TitleBar />
      <Ribbon />
      <FormulaBar />
      <main className="flex min-h-0 flex-1">
        <div className="relative flex-1 overflow-hidden border-r border-[#bdbdbd] bg-white font-['Noto_Sans_CJK_SC',sans-serif]">
          <Sheet />
          <div className="pointer-events-none absolute top-[21px] left-[31px] h-[58px] w-[159px] bg-[#c6c8c8] mix-blend-multiply" />
          <div className="pointer-events-none absolute top-[20px] left-[30px] z-20 flex h-[60px] w-[161px] items-end justify-end border border-[#3f7f64]">
            <div className="size-[3px] bg-[#2f6b50]" />
          </div>
          <div className="pointer-events-none absolute top-[192px] left-[324px] z-20">
            <Svg w={12} h={13}>
              <path d="M4 1h3.500v3H11v3.500H7.500V11H4V7.500H1V4h3z" fill="#fff" stroke="#333" strokeWidth="1.200" />
            </Svg>
          </div>
        </div>
        <div className="flex w-[13px] flex-col items-center">
          <button aria-label="向上滚动" className="flex h-[11px] w-[9px] items-center justify-center border border-[#c8c8c8] bg-white">
            <Svg w={5} h={4}><path d="M0.800 3h3.400L2.500 1z" fill="#555" /></Svg>
          </button>
          <div className="w-[9px] flex-[20] border border-[#c8c8c8] bg-white" />
          <div className="w-[9px] flex-1 bg-[#d5d5d5]" />
          <button aria-label="向下滚动" className="flex h-[9px] w-[9px] items-center justify-center border border-[#c8c8c8] bg-white">
            <Caret />
          </button>
        </div>
      </main>
      <SheetBar />
      <StatusBar />
      <Taskbar />
      <p className="pointer-events-none absolute inset-x-0 bottom-[74px] z-30 text-center font-['Noto_Sans_CJK_SC',sans-serif] text-[28px] leading-9 text-black [text-shadow:0_1px_3px_rgba(0,0,0,0.35)]">
        先撤销一下同样的我们选择这个数据区域然后点击数据找到数据验证
      </p>
      <Watermark />
      <Recorder />
    </div>
  )
}
